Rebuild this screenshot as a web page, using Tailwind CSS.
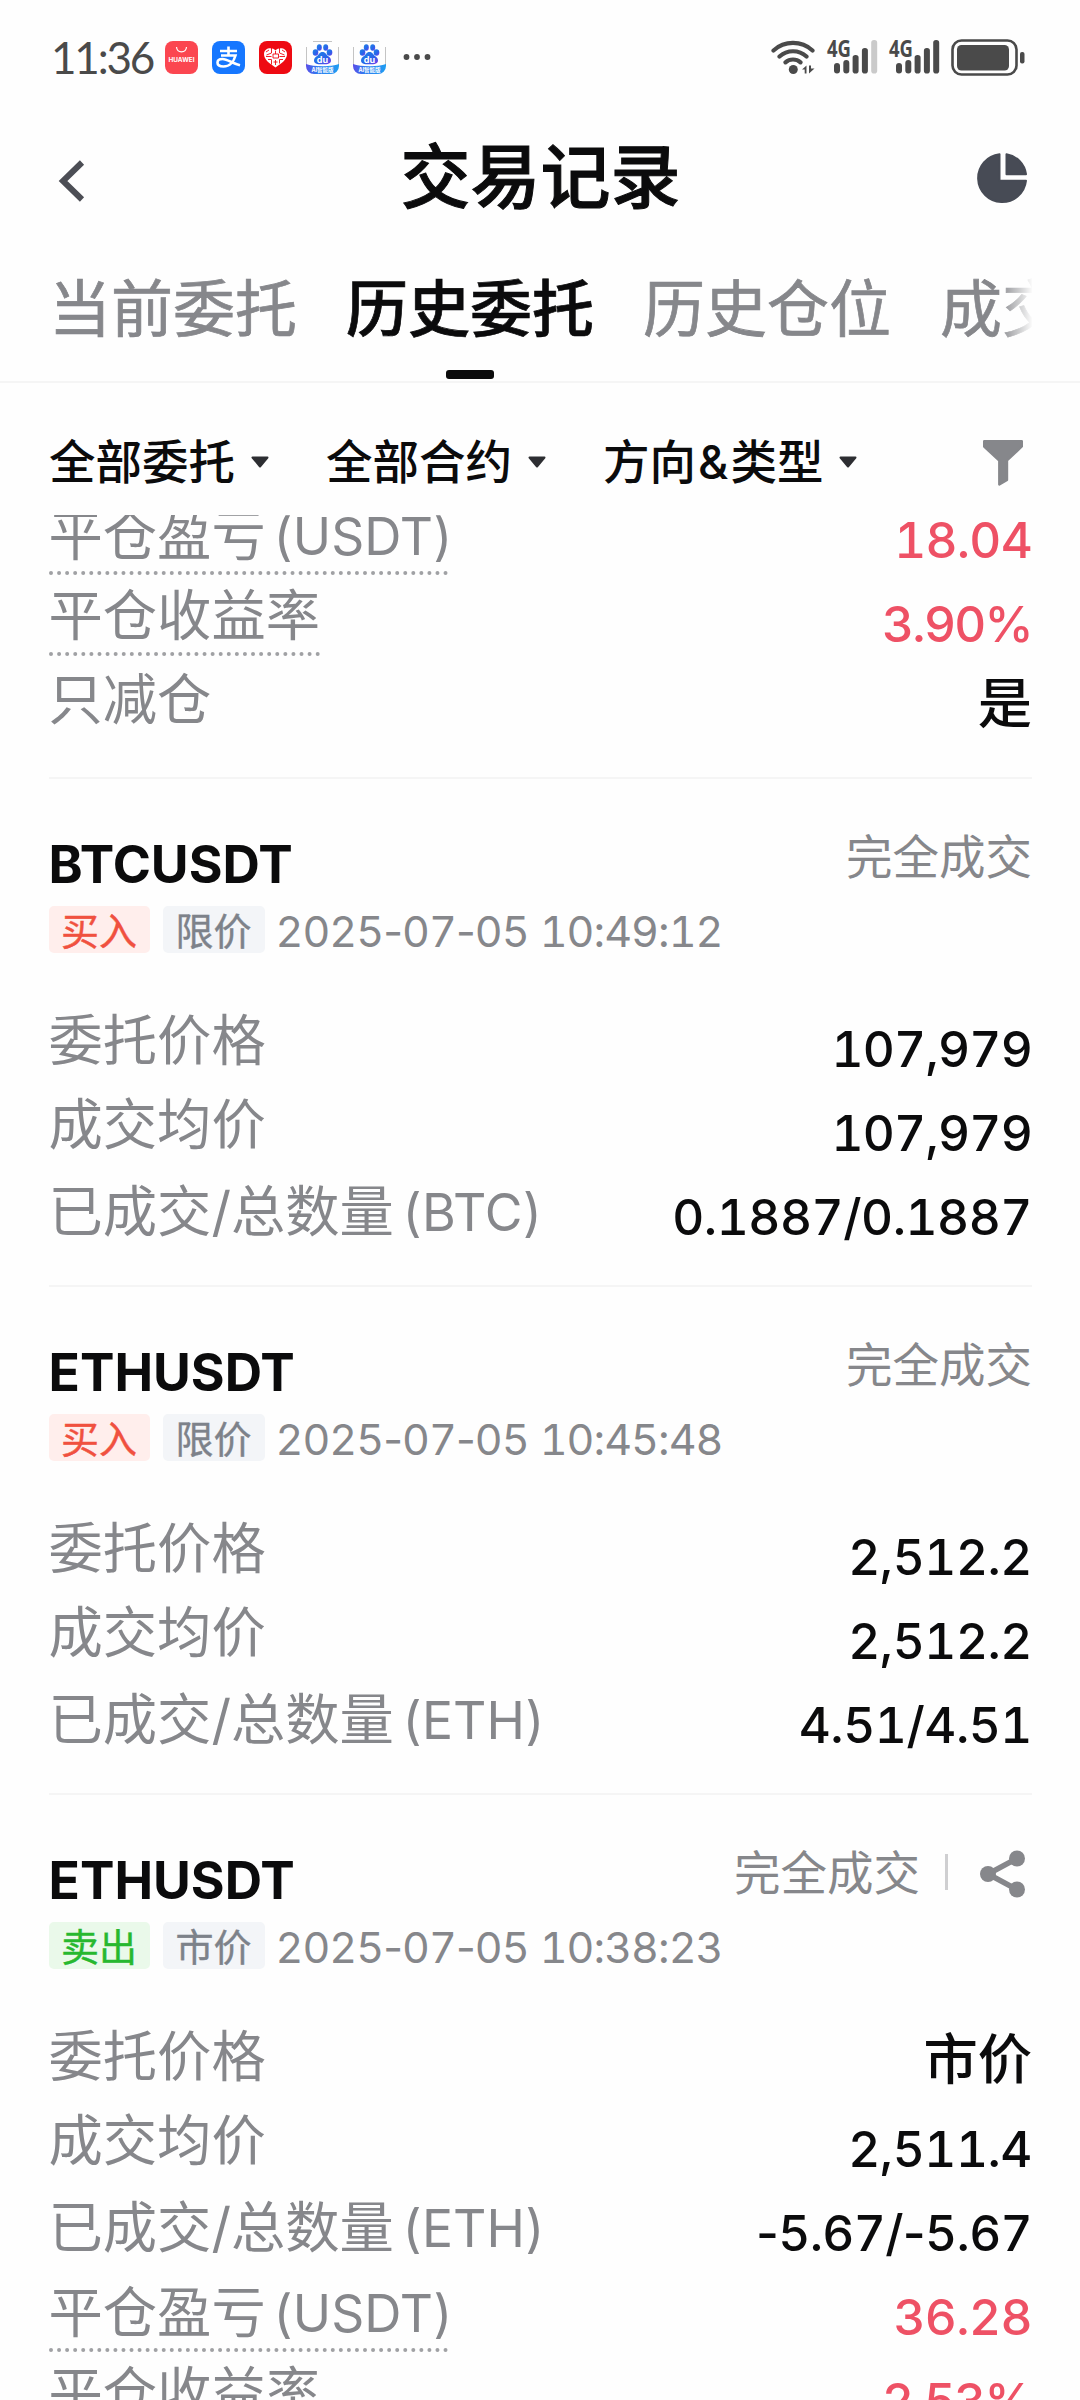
<!DOCTYPE html>
<html lang="zh-CN">
<head>
<meta charset="utf-8">
<title>交易记录</title>
<script src="https://cdn.jsdelivr.net/npm/@tailwindcss/browser@4"></script>
</head>
<body class="bg-white">
<div class="w-[1080px] h-[2400px] overflow-hidden flex flex-col bg-[#fefefe] text-[#0b0b0c] font-['Inter','Noto_Sans_CJK_SC',sans-serif] tabular-nums whitespace-nowrap">

  <!-- status bar -->
  <div class="h-[114px] shrink-0 flex items-center justify-between pl-[51px] pr-[55px]">
    <div class="flex items-center">
      <span class="w-[114px] text-[44px] leading-[60px] tracking-[-0.05em] font-['Lato',sans-serif] text-[#4a4a4a]">11:36</span>
      <div class="flex gap-[14px]">
        <svg width="33" height="33" viewBox="0 0 33 33"><rect width="33" height="33" rx="8" fill="#fb4650"/><path d="M11.5 6c.6 6.500 9.400 6.500 10 0" fill="none" stroke="#fff" stroke-width="1.200"/><text x="16.500" y="21" font-size="6.300" font-weight="700" text-anchor="middle" textLength="26" lengthAdjust="spacingAndGlyphs" fill="#fff">HUAWEI</text></svg>
        <svg width="33" height="33" viewBox="0 0 33 33"><rect width="33" height="33" rx="8" fill="#1677ff"/><g fill="none" stroke="#fff" stroke-width="2.600"><path d="M8 10h17M16.500 5.500v9M9 14.500h14.500c-1.500 5.500-5.500 11-12 11-4 0-6-1.700-6-3.800 0-2.200 2-3.700 5-3.700 5 0 10 4.500 17.500 6.300"/></g></svg>
        <svg width="33" height="33" viewBox="0 0 33 33"><rect width="33" height="33" rx="8" fill="#ee0a12"/><path d="M16.500 26.500C10 22 5 18.500 5 13c0-6.500 8.500-7.500 11.500-3.500C19.500 5.500 28 6.500 28 13c0 5.500-5 9-11.500 13.500z" fill="#fff"/><g stroke="#ee0a12" stroke-width=".9" fill="none"><path d="M12.500 7v5l-5 2M10 9l-3 2M12.500 15.500H7m5.500 3H9m3.500 0v5M20.500 7v5l5 2M23 9l3 2M20.500 15.500H26m-5.500 3H24m-3.500 0v4M16.500 10v3M14 13h5.500v4H14zM14.500 21h4M16.500 19v5"/></g></svg>
        <svg width="33" height="33" viewBox="0 0 33 33"><defs><linearGradient id="bar" x1="0" x2="1"><stop offset="0" stop-color="#5b4ee8"/><stop offset=".35" stop-color="#2f7cf0"/><stop offset="1" stop-color="#1f9df2"/></linearGradient><linearGradient id="paw" x1="0" x2="1" y2="1"><stop offset="0" stop-color="#1c86e6"/><stop offset=".6" stop-color="#2a62ea"/><stop offset="1" stop-color="#7a3bea"/></linearGradient></defs><path d="M.5 25V6M32.500 25V6M7 .5h19" stroke="#c4c4c4"/><path d="M0 23c8 3 25 3 33 0v2a8 8 0 0 1-8 8H8a8 8 0 0 1-8-8z" fill="url(#bar)"/><g fill="url(#paw)"><ellipse cx="9.500" cy="11.500" rx="2.800" ry="3.200"/><ellipse cx="13.300" cy="6.500" rx="2.500" ry="3.200"/><ellipse cx="19.700" cy="6.500" rx="2.500" ry="3.200"/><ellipse cx="23.500" cy="11.500" rx="2.800" ry="3.200"/><path d="M16.500 11c3 0 3.500 2.500 5.500 4s3 2.500 3 4.500c0 3-2.500 3.800-8.500 3.800S8 22.500 8 19.500c0-2 1-3 3-4.500s2.500-4 5.500-4z"/></g><text x="16.500" y="21.500" font-size="9" font-weight="700" text-anchor="middle" fill="#fff">du</text><text x="16.500" y="31" font-size="5.500" font-weight="700" text-anchor="middle" fill="#fff">AI智能版</text></svg>
        <svg width="33" height="33" viewBox="0 0 33 33"><path d="M.5 25V6M32.500 25V6M7 .5h19" stroke="#c4c4c4"/><path d="M0 23c8 3 25 3 33 0v2a8 8 0 0 1-8 8H8a8 8 0 0 1-8-8z" fill="url(#bar)"/><g fill="url(#paw)"><ellipse cx="9.500" cy="11.500" rx="2.800" ry="3.200"/><ellipse cx="13.300" cy="6.500" rx="2.500" ry="3.200"/><ellipse cx="19.700" cy="6.500" rx="2.500" ry="3.200"/><ellipse cx="23.500" cy="11.500" rx="2.800" ry="3.200"/><path d="M16.500 11c3 0 3.500 2.500 5.500 4s3 2.500 3 4.500c0 3-2.500 3.800-8.500 3.800S8 22.500 8 19.500c0-2 1-3 3-4.500s2.500-4 5.500-4z"/></g><text x="16.500" y="21.500" font-size="9" font-weight="700" text-anchor="middle" fill="#fff">du</text><text x="16.500" y="31" font-size="5.500" font-weight="700" text-anchor="middle" fill="#fff">AI智能版</text></svg>
      </div>
      <svg class="ml-[17px]" width="28" height="8" viewBox="0 0 28 8" fill="#4a4a4a"><circle cx="3.500" cy="4" r="2.900"/><circle cx="14" cy="4" r="2.900"/><circle cx="24.500" cy="4" r="2.900"/></svg>
    </div>
    <div class="flex items-center">
      <svg width="45" height="36" viewBox="0 0 45 36"><g fill="none" stroke="#4a4a4a" stroke-width="4.200" stroke-linecap="round"><path d="M2.500 11.500a29 29 0 0 1 39 0M8.500 17.500a20 20 0 0 1 27 0M14.500 23.300a11.500 11.500 0 0 1 15 0"/></g><circle cx="22.300" cy="30.500" r="4.500" fill="#4a4a4a"/><path d="M31 30.500l4.500-4v8h-1.800v-4zM43.500 29.500l-5.500 5v-8h2v3z" fill="#4a4a4a"/></svg>
      <svg class="ml-[11px] overflow-visible" width="51" height="36" viewBox="0 0 51 36"><text x="0" y="17.500" font-size="23" font-weight="700" textLength="24" lengthAdjust="spacingAndGlyphs" font-family="Noto Sans" fill="#4a4a4a">4G</text><g fill="#4a4a4a"><rect x="7" y="24" width="6" height="10.500" rx="3"/><rect x="16.300" y="21" width="6" height="13.500" rx="3"/><rect x="25.600" y="16" width="6" height="18.500" rx="2.800"/><rect x="34.900" y="9" width="6" height="25.500" rx="2.800"/></g><rect x="44.200" y="1" width="6" height="33.500" rx="2.800" fill="#cacaca"/></svg>
      <svg class="ml-[11px] overflow-visible" width="51" height="36" viewBox="0 0 51 36"><text x="0" y="17.500" font-size="23" font-weight="700" textLength="24" lengthAdjust="spacingAndGlyphs" font-family="Noto Sans" fill="#4a4a4a">4G</text><g fill="#4a4a4a"><rect x="7" y="24" width="6" height="10.500" rx="3"/><rect x="16.300" y="21" width="6" height="13.500" rx="3"/><rect x="25.600" y="16" width="6" height="18.500" rx="2.800"/><rect x="34.900" y="9" width="6" height="25.500" rx="2.800"/><rect x="44.200" y="1" width="6" height="33.500" rx="2.800"/></g></svg>
      <svg class="ml-[11px]" width="74" height="37" viewBox="0 0 74 37"><rect x="1.500" y="1.500" width="64" height="34" rx="9" fill="none" stroke="#4a4a4a" stroke-width="2.600"/><rect x="6" y="6" width="52" height="25.500" rx="4.500" fill="#4a4a4a"/><rect x="69" y="13" width="4.500" height="11.500" rx="2" fill="#4a4a4a"/></svg>
    </div>
  </div>

  <!-- title bar -->
  <div class="h-[126px] shrink-0 flex items-center justify-between pl-[56px] pr-[51px]">
    <svg class="mt-[8px]" width="52" height="44" viewBox="0 0 52 44"><path d="M26 3.500L7 22l19 18.500" fill="none" stroke="#4c4e55" stroke-width="6"/></svg>
    <h1 class="-ml-[4px] mt-[2px] text-[70px] leading-[100px] font-medium [-webkit-text-stroke:1px_#0b0b0c]">交易记录</h1>
    <svg class="mt-[2px]" width="52" height="52" viewBox="0 0 52 52" fill="#474b55" stroke="#474b55" stroke-linejoin="round" stroke-width="2"><path d="M22.500 2.200v26.500h26.500A24 24 0 1 1 22.500 2.200z"/><path d="M29.500 2.200v20h19.500A23.500 23.500 0 0 0 29.500 2.200z"/></svg>
  </div>

  <!-- tabs -->
  <div class="h-[143px] shrink-0 border-b-2 border-[#f5f5f5] pl-[49px] pr-[48px]">
    <div class="h-full flex gap-[49px] overflow-hidden text-[62px] leading-[140px] text-[#86878b] [-webkit-text-stroke:0.7px] mask-r-from-[950px] mask-r-to-[984px]">
      <span>当前委托</span>
      <div class="h-full flex flex-col items-center text-[#0b0b0c] font-medium">
        <span>历史委托</span>
        <div class="w-[48px] h-[9px] -mt-[10px] rounded-[3px] bg-[#0b0b0c]"></div>
      </div>
      <span>历史仓位</span>
      <span>成交</span>
    </div>
  </div>

  <!-- filters -->
  <div class="h-[132px] shrink-0 pt-[26px] pl-[49px] pr-[56px] flex items-center justify-between">
    <div class="flex text-[46.500px] leading-[60px] font-medium">
      <div class="flex items-center gap-4 mr-[57px]">全部委托<svg width="18" height="12" viewBox="0 0 18 12"><path d="M1.500 1.500h15L9 10.500z" fill="#2d2e32" stroke="#2d2e32" stroke-width="2" stroke-linejoin="round"/></svg></div>
      <div class="flex items-center gap-4 mr-[57px]">全部合约<svg width="18" height="12" viewBox="0 0 18 12"><path d="M1.500 1.500h15L9 10.500z" fill="#2d2e32" stroke="#2d2e32" stroke-width="2" stroke-linejoin="round"/></svg></div>
      <div class="flex items-center gap-4"><span>方向<span class="px-[2px]">&amp;</span>类型</span><svg width="18" height="12" viewBox="0 0 18 12"><path d="M1.500 1.500h15L9 10.500z" fill="#2d2e32" stroke="#2d2e32" stroke-width="2" stroke-linejoin="round"/></svg></div>
    </div>
    <svg class="mt-[2px]" width="42" height="48" viewBox="0 0 42 48"><path d="M2.200 2.200h37.600v5.300L25 21.500V41l-7.700 4.500V21.500L2.200 7.500z" fill="#86878b" stroke="#86878b" stroke-width="2.400" stroke-linejoin="round"/></svg>
  </div>

  <!-- order list -->
  <div class="flex-1 min-h-0 overflow-hidden pl-[48.500px] pr-[48px] text-[54.300px]">
    <section class="-mt-[17px] pb-[27px] border-b-2 border-[#f5f5f5]">
      <div class="h-[84px] flex justify-between leading-[84px]">
        <span class="w-[399px] h-[77px] leading-[74px] text-[#86878b] border-b-4 border-dotted border-[#a0a1a4]">平仓盈亏<span class="text-[51.500px] ml-[7px]">(USDT)</span></span>
        <span class="text-[49.500px] font-medium tracking-[-0.015em] text-[#ee5165]">18.04</span>
      </div>
      <div class="h-[84px] flex justify-between leading-[84px]">
        <span class="h-[74px] leading-[66px] text-[#86878b] border-b-4 border-dotted border-[#a0a1a4]">平仓收益率</span>
        <span class="text-[49.500px] font-medium tracking-[-0.035em] text-[#ee5165]">3.90%</span>
      </div>
      <div class="h-[84px] flex justify-between leading-[84px]">
        <span class="leading-[67px] text-[#86878b]">只减仓</span>
        <span class="leading-[75px] font-medium">是</span>
      </div>
    </section>

    <section class="h-[508px] pt-[50px] border-b-2 border-[#f5f5f5]">
      <div class="h-[72px] flex justify-between">
        <h2 class="text-[51.700px] leading-[71px] font-bold">BTCUSDT</h2>
        <span class="text-[46.500px] leading-[56px] text-[#86878b]">完全成交</span>
      </div>
      <div class="mt-[5px] flex h-[47px] text-[38px] leading-[50px]">
        <span class="w-[101px] h-[47px] text-center rounded-[5px] bg-[#ffeeec] text-[#f0513f] [-webkit-text-stroke:0.4px]">买入</span>
        <span class="w-[102px] h-[47px] ml-[13px] text-center rounded-[5px] bg-[#f3f5f8] text-[#7d828a] [-webkit-text-stroke:0.4px]">限价</span>
        <span class="ml-[11px] flex gap-[11px] text-[43px] tracking-[-0.022em] text-[#86878b]"><span>2025<i class="not-italic proportional-nums">-</i>07<i class="not-italic proportional-nums">-</i>05</span><span>10:49:12</span></span>
      </div>
      <div class="mt-[54px] h-[84px] flex justify-between leading-[84px]">
        <span class="leading-[67px] text-[#86878b]">委托价格</span>
        <span class="text-[49.500px] font-medium tracking-[-0.015em]">107,979</span>
      </div>
      <div class="h-[84px] flex justify-between leading-[84px]">
        <span class="leading-[67px] text-[#86878b]">成交均价</span>
        <span class="text-[49.500px] font-medium tracking-[-0.015em]">107,979</span>
      </div>
      <div class="h-[84px] flex justify-between leading-[84px]">
        <span class="leading-[73px] text-[#86878b]">已成交/总数量<span class="text-[51.700px] ml-[8px]">(BTC)</span></span>
        <span class="text-[49.500px] font-medium tracking-[-0.009em]">0.1887/0.1887</span>
      </div>
    </section>

    <section class="h-[508px] pt-[50px] border-b-2 border-[#f5f5f5]">
      <div class="h-[72px] flex justify-between">
        <h2 class="text-[51.700px] leading-[71px] font-bold">ETHUSDT</h2>
        <span class="text-[46.500px] leading-[56px] text-[#86878b]">完全成交</span>
      </div>
      <div class="mt-[5px] flex h-[47px] text-[38px] leading-[50px]">
        <span class="w-[101px] h-[47px] text-center rounded-[5px] bg-[#ffeeec] text-[#f0513f] [-webkit-text-stroke:0.4px]">买入</span>
        <span class="w-[102px] h-[47px] ml-[13px] text-center rounded-[5px] bg-[#f3f5f8] text-[#7d828a] [-webkit-text-stroke:0.4px]">限价</span>
        <span class="ml-[11px] flex gap-[11px] text-[43px] tracking-[-0.022em] text-[#86878b]"><span>2025<i class="not-italic proportional-nums">-</i>07<i class="not-italic proportional-nums">-</i>05</span><span>10:45:48</span></span>
      </div>
      <div class="mt-[54px] h-[84px] flex justify-between leading-[84px]">
        <span class="leading-[67px] text-[#86878b]">委托价格</span>
        <span class="text-[49.500px] font-medium tracking-[-0.009em]">2,512.2</span>
      </div>
      <div class="h-[84px] flex justify-between leading-[84px]">
        <span class="leading-[67px] text-[#86878b]">成交均价</span>
        <span class="text-[49.500px] font-medium tracking-[-0.009em]">2,512.2</span>
      </div>
      <div class="h-[84px] flex justify-between leading-[84px]">
        <span class="leading-[73px] text-[#86878b]">已成交/总数量<span class="text-[51.700px] ml-[8px]">(ETH)</span></span>
        <span class="text-[49.500px] font-medium tracking-[-0.009em]">4.51/4.51</span>
      </div>
    </section>

    <section class="pt-[50px]">
      <div class="h-[72px] flex justify-between">
        <h2 class="text-[51.700px] leading-[71px] font-bold">ETHUSDT</h2>
        <div class="h-[56px] flex items-center text-[46.500px] leading-[56px] text-[#86878b]">
          <span>完全成交</span>
          <span class="w-[3px] h-[36px] ml-[25px] mr-[31px] -mt-[2px] bg-[#cfcfd1]"></span>
          <svg class="mr-[6px] mt-[2px]" width="47" height="48" viewBox="0 0 47 48"><path d="M38 8.500L9 24l29 15.500" fill="none" stroke="#86878b" stroke-width="5.500"/><g fill="#86878b"><circle cx="38" cy="8.500" r="8"/><circle cx="9" cy="24" r="8"/><circle cx="38" cy="39.500" r="8"/></g></svg>
        </div>
      </div>
      <div class="mt-[5px] flex h-[47px] text-[38px] leading-[50px]">
        <span class="w-[101px] h-[47px] text-center rounded-[5px] bg-[#eaf9ea] text-[#27b82f] [-webkit-text-stroke:0.4px]">卖出</span>
        <span class="w-[102px] h-[47px] ml-[13px] text-center rounded-[5px] bg-[#f3f5f8] text-[#7d828a] [-webkit-text-stroke:0.4px]">市价</span>
        <span class="ml-[11px] flex gap-[11px] text-[43px] tracking-[-0.022em] text-[#86878b]"><span>2025<i class="not-italic proportional-nums">-</i>07<i class="not-italic proportional-nums">-</i>05</span><span>10:38:23</span></span>
      </div>
      <div class="mt-[54px] h-[84px] flex justify-between leading-[84px]">
        <span class="leading-[67px] text-[#86878b]">委托价格</span>
        <span class="leading-[73px] font-medium">市价</span>
      </div>
      <div class="h-[84px] flex justify-between leading-[84px]">
        <span class="leading-[67px] text-[#86878b]">成交均价</span>
        <span class="text-[49.500px] font-medium tracking-[-0.009em]">2,511.4</span>
      </div>
      <div class="h-[84px] flex justify-between leading-[84px]">
        <span class="leading-[73px] text-[#86878b]">已成交/总数量<span class="text-[51.700px] ml-[8px]">(ETH)</span></span>
        <span class="text-[49.500px] font-medium tracking-[-0.013em]"><i class="not-italic proportional-nums">-</i>5.67/<i class="not-italic proportional-nums">-</i>5.67</span>
      </div>
      <div class="h-[84px] flex justify-between leading-[84px]">
        <span class="w-[399px] h-[77px] leading-[74px] text-[#86878b] border-b-4 border-dotted border-[#a0a1a4]">平仓盈亏<span class="text-[51.500px] ml-[7px]">(USDT)</span></span>
        <span class="text-[49.500px] font-medium tracking-[-0.012em] text-[#ee5165]">36.28</span>
      </div>
      <div class="h-[84px] flex justify-between leading-[84px]">
        <span class="h-[74px] leading-[66px] text-[#86878b] border-b-4 border-dotted border-[#a0a1a4]">平仓收益率</span>
        <span class="text-[49.500px] font-medium tracking-[-0.035em] text-[#ee5165]">2.53%</span>
      </div>
    </section>
  </div>
</div>
</body>
</html>
